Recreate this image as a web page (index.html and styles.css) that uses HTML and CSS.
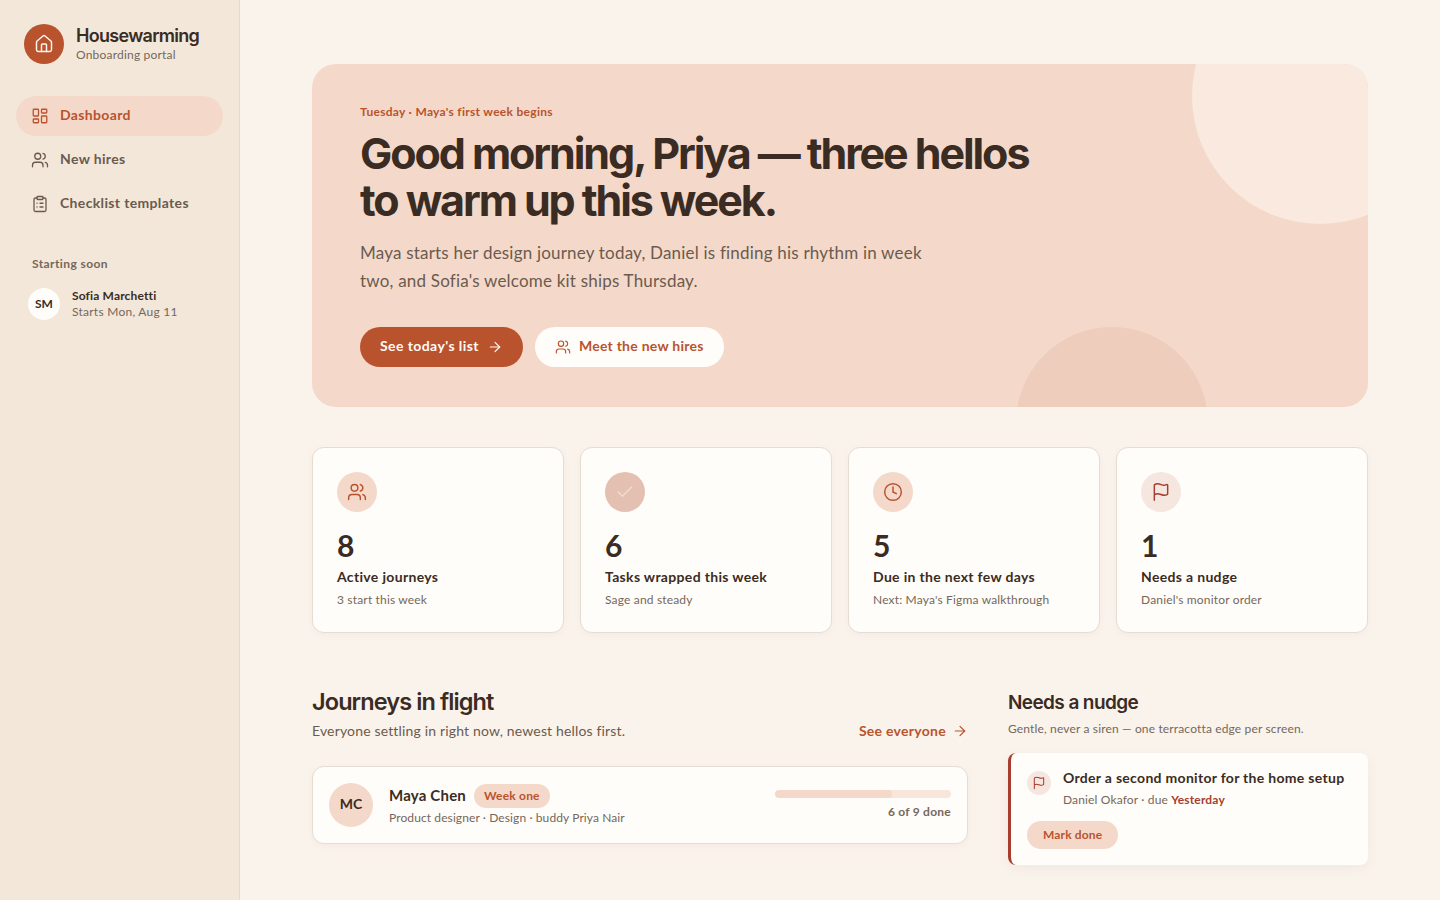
FILE: index.html
```html
<!DOCTYPE html>
<html lang="en">
<head>
  <meta charset="UTF-8" />
  <title>Housewarming</title>
  <link rel="stylesheet" href="styles.css">
</head>
<body>
  <div class="container">
    <aside class="sidebar">
      <div class="brand">
        <div class="brand-mark">
          <svg width="20" height="20" viewBox="0 0 24 24" class="ico"><path d="M15 21v-8a1 1 0 0 0-1-1h-4a1 1 0 0 0-1 1v8"/><path d="M3 10a2 2 0 0 1 .709-1.528l7-5.999a2 2 0 0 1 2.582 0l7 5.999A2 2 0 0 1 21 10v9a2 2 0 0 1-2 2H5a2 2 0 0 1-2-2z"/></svg>
        </div>
        <div>
          <div class="brand-name">Housewarming</div>
          <div class="brand-sub">Onboarding portal</div>
        </div>
      </div>

      <nav class="nav">
        <a class="nav-item active">
          <svg width="18" height="18" viewBox="0 0 24 24" class="ico"><rect width="7" height="9" x="3" y="3" rx="1"/><rect width="7" height="5" x="14" y="3" rx="1"/><rect width="7" height="9" x="14" y="12" rx="1"/><rect width="7" height="5" x="3" y="16" rx="1"/></svg>
          <span class="lbl">Dashboard</span>
        </a>
        <a class="nav-item">
          <svg width="18" height="18" viewBox="0 0 24 24" class="ico"><path d="M16 21v-2a4 4 0 0 0-4-4H6a4 4 0 0 0-4 4v2"/><circle cx="9" cy="7" r="4"/><path d="M22 21v-2a4 4 0 0 0-3-3.87"/><path d="M16 3.13a4 4 0 0 1 0 7.75"/></svg>
          <span class="lbl">New hires</span>
        </a>
        <a class="nav-item">
          <svg width="18" height="18" viewBox="0 0 24 24" class="ico"><rect width="8" height="4" x="8" y="2" rx="1"/><path d="M16 4h2a2 2 0 0 1 2 2v14a2 2 0 0 1-2 2H6a2 2 0 0 1-2-2V6a2 2 0 0 1 2-2h2"/><path d="M12 11h4"/><path d="M12 16h4"/><path d="M8 11h.01"/><path d="M8 16h.01"/></svg>
          <span class="lbl">Checklist templates</span>
        </a>
      </nav>

      <div class="soon">
        <div class="soon-title">Starting soon</div>
        <div class="soon-row">
          <div class="soon-avatar">SM</div>
          <div>
            <div class="soon-name">Sofia Marchetti</div>
            <div class="soon-date">Starts Mon, Aug 11</div>
          </div>
        </div>
      </div>
    </aside>

    <main class="main">
      <section class="hero">
        <div class="hero-blob-top"></div>
        <div class="hero-blob-bottom"></div>
        <div class="hero-eyebrow">Tuesday · Maya's first week begins</div>
        <h1>Good morning, Priya — three hellos<br>to warm up this week.</h1>
        <p class="hero-text">Maya starts her design journey today, Daniel is finding his rhythm in week two, and Sofia's welcome kit ships Thursday.</p>
        <div class="hero-actions">
          <a class="btn btn-primary"><span class="lbl">See today's list</span>
            <svg width="16" height="16" viewBox="0 0 24 24" class="ico"><path d="M5 12h14"/><path d="m12 5 7 7-7 7"/></svg>
          </a>
          <a class="btn btn-light">
            <svg width="16" height="16" viewBox="0 0 24 24" class="ico"><path d="M16 21v-2a4 4 0 0 0-4-4H6a4 4 0 0 0-4 4v2"/><circle cx="9" cy="7" r="4"/><path d="M22 21v-2a4 4 0 0 0-3-3.87"/><path d="M16 3.13a4 4 0 0 1 0 7.75"/></svg>
            <span class="lbl">Meet the new hires</span>
          </a>
        </div>
      </section>

      <section class="stats">
        <div class="stat">
          <div class="stat-icon">
            <svg width="20" height="20" viewBox="0 0 24 24" class="ico"><path d="M16 21v-2a4 4 0 0 0-4-4H6a4 4 0 0 0-4 4v2"/><circle cx="9" cy="7" r="4"/><path d="M22 21v-2a4 4 0 0 0-3-3.87"/><path d="M16 3.13a4 4 0 0 1 0 7.75"/></svg>
          </div>
          <div class="stat-num">8</div>
          <div class="stat-label">Active journeys</div>
          <div class="stat-sub">3 start this week</div>
        </div>
        <div class="stat">
          <div class="stat-icon sage">
            <svg width="20" height="20" viewBox="0 0 24 24" class="ico"><path d="M20 6 9 17l-5-5"/></svg>
          </div>
          <div class="stat-num">6</div>
          <div class="stat-label">Tasks wrapped this week</div>
          <div class="stat-sub">Sage and steady</div>
        </div>
        <div class="stat">
          <div class="stat-icon">
            <svg width="20" height="20" viewBox="0 0 24 24" class="ico"><circle cx="12" cy="12" r="10"/><path d="M12 6v6l4 2"/></svg>
          </div>
          <div class="stat-num">5</div>
          <div class="stat-label">Due in the next few days</div>
          <div class="stat-sub">Next: Maya's Figma walkthrough</div>
        </div>
        <div class="stat">
          <div class="stat-icon rose">
            <svg width="20" height="20" viewBox="0 0 24 24" class="ico"><path d="M4 22V4a1 1 0 0 1 .4-.8A6 6 0 0 1 8 2c3 0 5 2 7.333 2q2 0 3.067-.8A1 1 0 0 1 20 4v10a1 1 0 0 1-.4.8A6 6 0 0 1 16 16c-3 0-5-2-8-2a6 6 0 0 0-4 1.528"/></svg>
          </div>
          <div class="stat-num">1</div>
          <div class="stat-label">Needs a nudge</div>
          <div class="stat-sub">Daniel's monitor order</div>
        </div>
      </section>

      <section class="lower">
        <div class="journeys">
          <div class="section-head">
            <div>
              <h2>Journeys in flight</h2>
              <p class="section-sub">Everyone settling in right now, newest hellos first.</p>
            </div>
            <a class="see-all">See everyone
              <svg width="16" height="16" viewBox="0 0 24 24" class="ico"><path d="M5 12h14"/><path d="m12 5 7 7-7 7"/></svg>
            </a>
          </div>
          <div class="journey">
            <div class="journey-avatar"><span class="lbl">MC</span></div>
            <div class="journey-info">
              <div class="journey-top">
                <span class="journey-name">Maya Chen</span>
                <span class="pill">Week one</span>
              </div>
              <div class="journey-meta">Product designer · Design · buddy Priya Nair</div>
            </div>
            <div class="journey-progress">
              <div class="bar"><div class="bar-fill" style="width: 66.7%"></div></div>
              <div class="bar-label">6 of 9 done</div>
            </div>
          </div>
        </div>

        <div class="nudges">
          <h2>Needs a nudge</h2>
          <p class="nudge-sub">Gentle, never a siren — one terracotta edge per screen.</p>
          <div class="nudge">
            <div class="nudge-top">
              <div class="nudge-icon">
                <svg width="14" height="14" viewBox="0 0 24 24" class="ico"><path d="M4 22V4a1 1 0 0 1 .4-.8A6 6 0 0 1 8 2c3 0 5 2 7.333 2q2 0 3.067-.8A1 1 0 0 1 20 4v10a1 1 0 0 1-.4.8A6 6 0 0 1 16 16c-3 0-5-2-8-2a6 6 0 0 0-4 1.528"/></svg>
              </div>
              <div>
                <div class="nudge-title">Order a second monitor for the home setup</div>
                <div class="nudge-meta">Daniel Okafor · due <b>Yesterday</b></div>
              </div>
            </div>
            <a class="nudge-btn">Mark done</a>
          </div>
        </div>
      </section>
    </main>
  </div>
</body>
</html>
```

FILE: styles.css
```css
html, body {
  height: 100%;
  margin: 0;
  padding: 0;
  font-family: Lato, 'Noto Sans', sans-serif;
  background: #faf3ec;
  color: #3a2c23;
  overflow: hidden;
}

h1, h2, p {
  margin: 0;
}

.ico {
  fill: none;
  stroke: currentColor;
  stroke-width: 1.75;
  stroke-linecap: round;
  stroke-linejoin: round;
  flex-shrink: 0;
}

/* lato sits low in its box, lift it next to icons */
.lbl {
  margin-bottom: 3px;
}

.container {
  display: flex;
  height: 100%;
}

.sidebar {
  width: 240px;
  box-sizing: border-box;
  background: #f3e7da;
  border-right: 1px solid #e8d9cb;
  padding: 24px 16px;
  flex-shrink: 0;
}

.brand {
  display: flex;
  align-items: center;
  gap: 12px;
  padding: 0 8px;
}

.brand-mark {
  width: 40px;
  height: 40px;
  border-radius: 50%;
  background: #b9532e;
  color: #fdf6ef;
  display: grid;
  place-items: center;
}

.brand-name {
  font-family: Inter, sans-serif;
  font-size: 18px;
  font-weight: 600;
  letter-spacing: -0.7px;
  line-height: 22px;
}

.brand-sub {
  font-size: 12px;
  color: #75675b;
  line-height: 16px;
  letter-spacing: 0.2px;
}

.nav {
  margin-top: 32px;
  display: flex;
  flex-direction: column;
  gap: 4px;
}

.nav-item {
  display: flex;
  align-items: center;
  gap: 11px;
  height: 40px;
  padding: 0 15px;
  border-radius: 20px;
  font-size: 14px;
  font-weight: 700;
  letter-spacing: 0.35px;
  color: #6b5b4e;
}

.nav-item.active {
  background: #f4d9ca;
  color: #b9532e;
}

.soon {
  margin-top: 32px;
  padding: 0 16px;
}

.soon-title {
  font-size: 12px;
  font-weight: 700;
  letter-spacing: 0.4px;
  color: #75675b;
}

.soon-row {
  display: flex;
  align-items: center;
  gap: 12px;
  margin-top: 17px;
  margin-left: -4px;
}

.soon-avatar {
  width: 32px;
  height: 32px;
  box-sizing: border-box;
  padding-bottom: 2px;
  border-radius: 50%;
  background: #fffdf9;
  display: grid;
  place-items: center;
  font-size: 12px;
  font-weight: 700;
}

.soon-name {
  font-size: 12px;
  font-weight: 700;
  line-height: 16px;
  letter-spacing: 0.15px;
}

.soon-date {
  font-size: 12px;
  color: #75675b;
  line-height: 16px;
  letter-spacing: 0.25px;
}

.main {
  flex: 1;
  padding: 64px 72px;
  min-width: 0;
}

.hero {
  position: relative;
  overflow: hidden;
  background: #f4d9ca;
  border-radius: 24px;
  padding: 40px 48px;
  height: 343px;
  box-sizing: border-box;
}

.hero > * {
  position: relative;
}

.hero .hero-blob-top {
  position: absolute;
  top: -96px;
  right: -80px;
  width: 256px;
  height: 256px;
  border-radius: 50%;
  background: #f9e9de;
}

.hero .hero-blob-bottom {
  position: absolute;
  bottom: -112px;
  left: 704px;
  width: 192px;
  height: 192px;
  border-radius: 50%;
  background: #efcdbd;
}

.hero-eyebrow {
  font-size: 12px;
  font-weight: 700;
  color: #b9532e;
  line-height: 16px;
  letter-spacing: 0.3px;
}

h1 {
  font-family: Inter, sans-serif;
  font-size: 43px;
  font-weight: 700;
  letter-spacing: -2.08px;
  line-height: 47px;
  margin-top: 10px;
}

.hero-text {
  margin-top: 15px;
  max-width: 576px;
  font-size: 17px;
  line-height: 28px;
  letter-spacing: 0.2px;
  color: #6b5b4e;
}

.hero-actions {
  display: flex;
  gap: 12px;
  margin-top: 32px;
}

.btn {
  display: flex;
  align-items: center;
  gap: 8px;
  height: 40px;
  padding: 0 20px;
  border-radius: 20px;
  font-size: 14px;
  font-weight: 700;
}

.btn-primary {
  background: #b9532e;
  color: #fffaf5;
  letter-spacing: 0.42px;
}

.btn-light {
  background: #fffdf9;
  color: #b9532e;
  letter-spacing: 0.25px;
}

.stats {
  display: grid;
  grid-template-columns: repeat(4, 1fr);
  gap: 16px;
  margin-top: 40px;
}

.stat {
  background: #fffdf9;
  border: 1px solid #e6dcd2;
  border-radius: 12px;
  padding: 24px;
  height: 186px;
  box-sizing: border-box;
  box-shadow: 0 2px 6px rgba(120, 80, 50, 0.05);
}

.stat-icon {
  width: 40px;
  height: 40px;
  border-radius: 50%;
  background: #f4d9ca;
  color: #b9532e;
  display: grid;
  place-items: center;
}

.stat-icon.sage {
  background: #e4c0b2;
  color: #f0dbd0;
}

.stat-icon.rose {
  background: #f5e6e0;
  color: #a63d2f;
}

.stat-num {
  font-size: 30px;
  font-weight: 700;
  line-height: 36px;
  margin-top: 15px;
}

.stat-label {
  font-size: 14px;
  font-weight: 700;
  line-height: 20px;
  margin-top: 4px;
  letter-spacing: 0.33px;
}

.stat-sub {
  font-size: 12px;
  color: #75675b;
  line-height: 16px;
  margin-top: 5px;
  letter-spacing: 0.17px;
}

.lower {
  display: flex;
  gap: 40px;
  margin-top: 56px;
}

.journeys {
  flex: 1;
  min-width: 0;
}

.nudges {
  width: 360px;
  flex-shrink: 0;
}

.section-head {
  display: flex;
  justify-content: space-between;
  align-items: flex-end;
}

h2 {
  font-family: Inter, sans-serif;
  font-weight: 600;
}

.journeys h2 {
  font-size: 23.5px;
  line-height: 26px;
  letter-spacing: -0.9px;
}

.section-sub {
  font-size: 14px;
  color: #6b5b4e;
  line-height: 20px;
  margin-top: 6px;
  letter-spacing: 0.16px;
}

.see-all {
  display: flex;
  align-items: center;
  gap: 6px;
  font-size: 14px;
  font-weight: 700;
  color: #b9532e;
  line-height: 20px;
  letter-spacing: 0.28px;
}

.journey {
  display: flex;
  align-items: center;
  gap: 16px;
  margin-top: 25px;
  height: 78px;
  box-sizing: border-box;
  padding: 0 16px;
  background: #fffdf9;
  border: 1px solid #e6dcd2;
  border-radius: 12px;
  box-shadow: 0 2px 6px rgba(120, 80, 50, 0.05);
}

.journey-avatar {
  width: 44px;
  height: 44px;
  border-radius: 50%;
  background: #f4d9ca;
  display: grid;
  place-items: center;
  font-size: 14px;
  font-weight: 700;
}

.journey-info {
  flex: 1;
}

.journey-top {
  display: flex;
  align-items: center;
  gap: 8px;
}

.journey-name {
  font-size: 15px;
  font-weight: 700;
  letter-spacing: 0.2px;
  margin-bottom: 2px;
}

.pill {
  background: #f4d9ca;
  color: #b9532e;
  font-size: 12px;
  font-weight: 700;
  line-height: 24px;
  padding: 0 10px;
  border-radius: 12px;
  letter-spacing: 0.2px;
}

.journey-meta {
  font-size: 12px;
  color: #75675b;
  line-height: 16px;
  margin-top: 2px;
  letter-spacing: 0.1px;
}

.journey-progress {
  width: 176px;
}

.bar {
  height: 8px;
  border-radius: 4px;
  background: #f8e6dc;
  overflow: hidden;
}

.bar-fill {
  height: 100%;
  background: #f4d9ca;
  border-radius: 4px;
}

.bar-label {
  font-size: 12px;
  font-weight: 700;
  color: #75675b;
  text-align: right;
  line-height: 16px;
  margin-top: 6px;
  letter-spacing: 0.25px;
}

.nudges h2 {
  font-size: 19px;
  line-height: 27px;
  letter-spacing: -0.6px;
}

.nudge-sub {
  font-size: 12px;
  color: #75675b;
  line-height: 16px;
  margin-top: 5px;
  letter-spacing: 0.15px;
}

.nudge {
  margin-top: 16px;
  background: #fffdf9;
  border-left: 3px solid #a63d2f;
  border-radius: 8px;
  padding: 16px;
  height: 112px;
  box-sizing: border-box;
  box-shadow: 0 4px 12px rgba(120, 80, 50, 0.06);
}

.nudge-top {
  display: flex;
  gap: 12px;
}

.nudge-icon {
  width: 24px;
  height: 24px;
  border-radius: 50%;
  background: #f5e6e0;
  color: #a63d2f;
  display: grid;
  place-items: center;
  margin-top: 2px;
}

.nudge-title {
  font-size: 14px;
  font-weight: 700;
  line-height: 18px;
  letter-spacing: 0.3px;
  white-space: nowrap;
}

.nudge-meta {
  font-size: 12px;
  color: #75675b;
  line-height: 16px;
  margin-top: 5px;
  letter-spacing: 0.15px;
}

.nudge-meta b {
  color: #a63d2f;
  font-weight: 700;
}

.nudge-btn {
  display: inline-block;
  margin-top: 13px;
  background: #f4d9ca;
  color: #b9532e;
  font-size: 12px;
  font-weight: 700;
  line-height: 28px;
  padding: 0 16px;
  border-radius: 14px;
  letter-spacing: 0.15px;
}
```
